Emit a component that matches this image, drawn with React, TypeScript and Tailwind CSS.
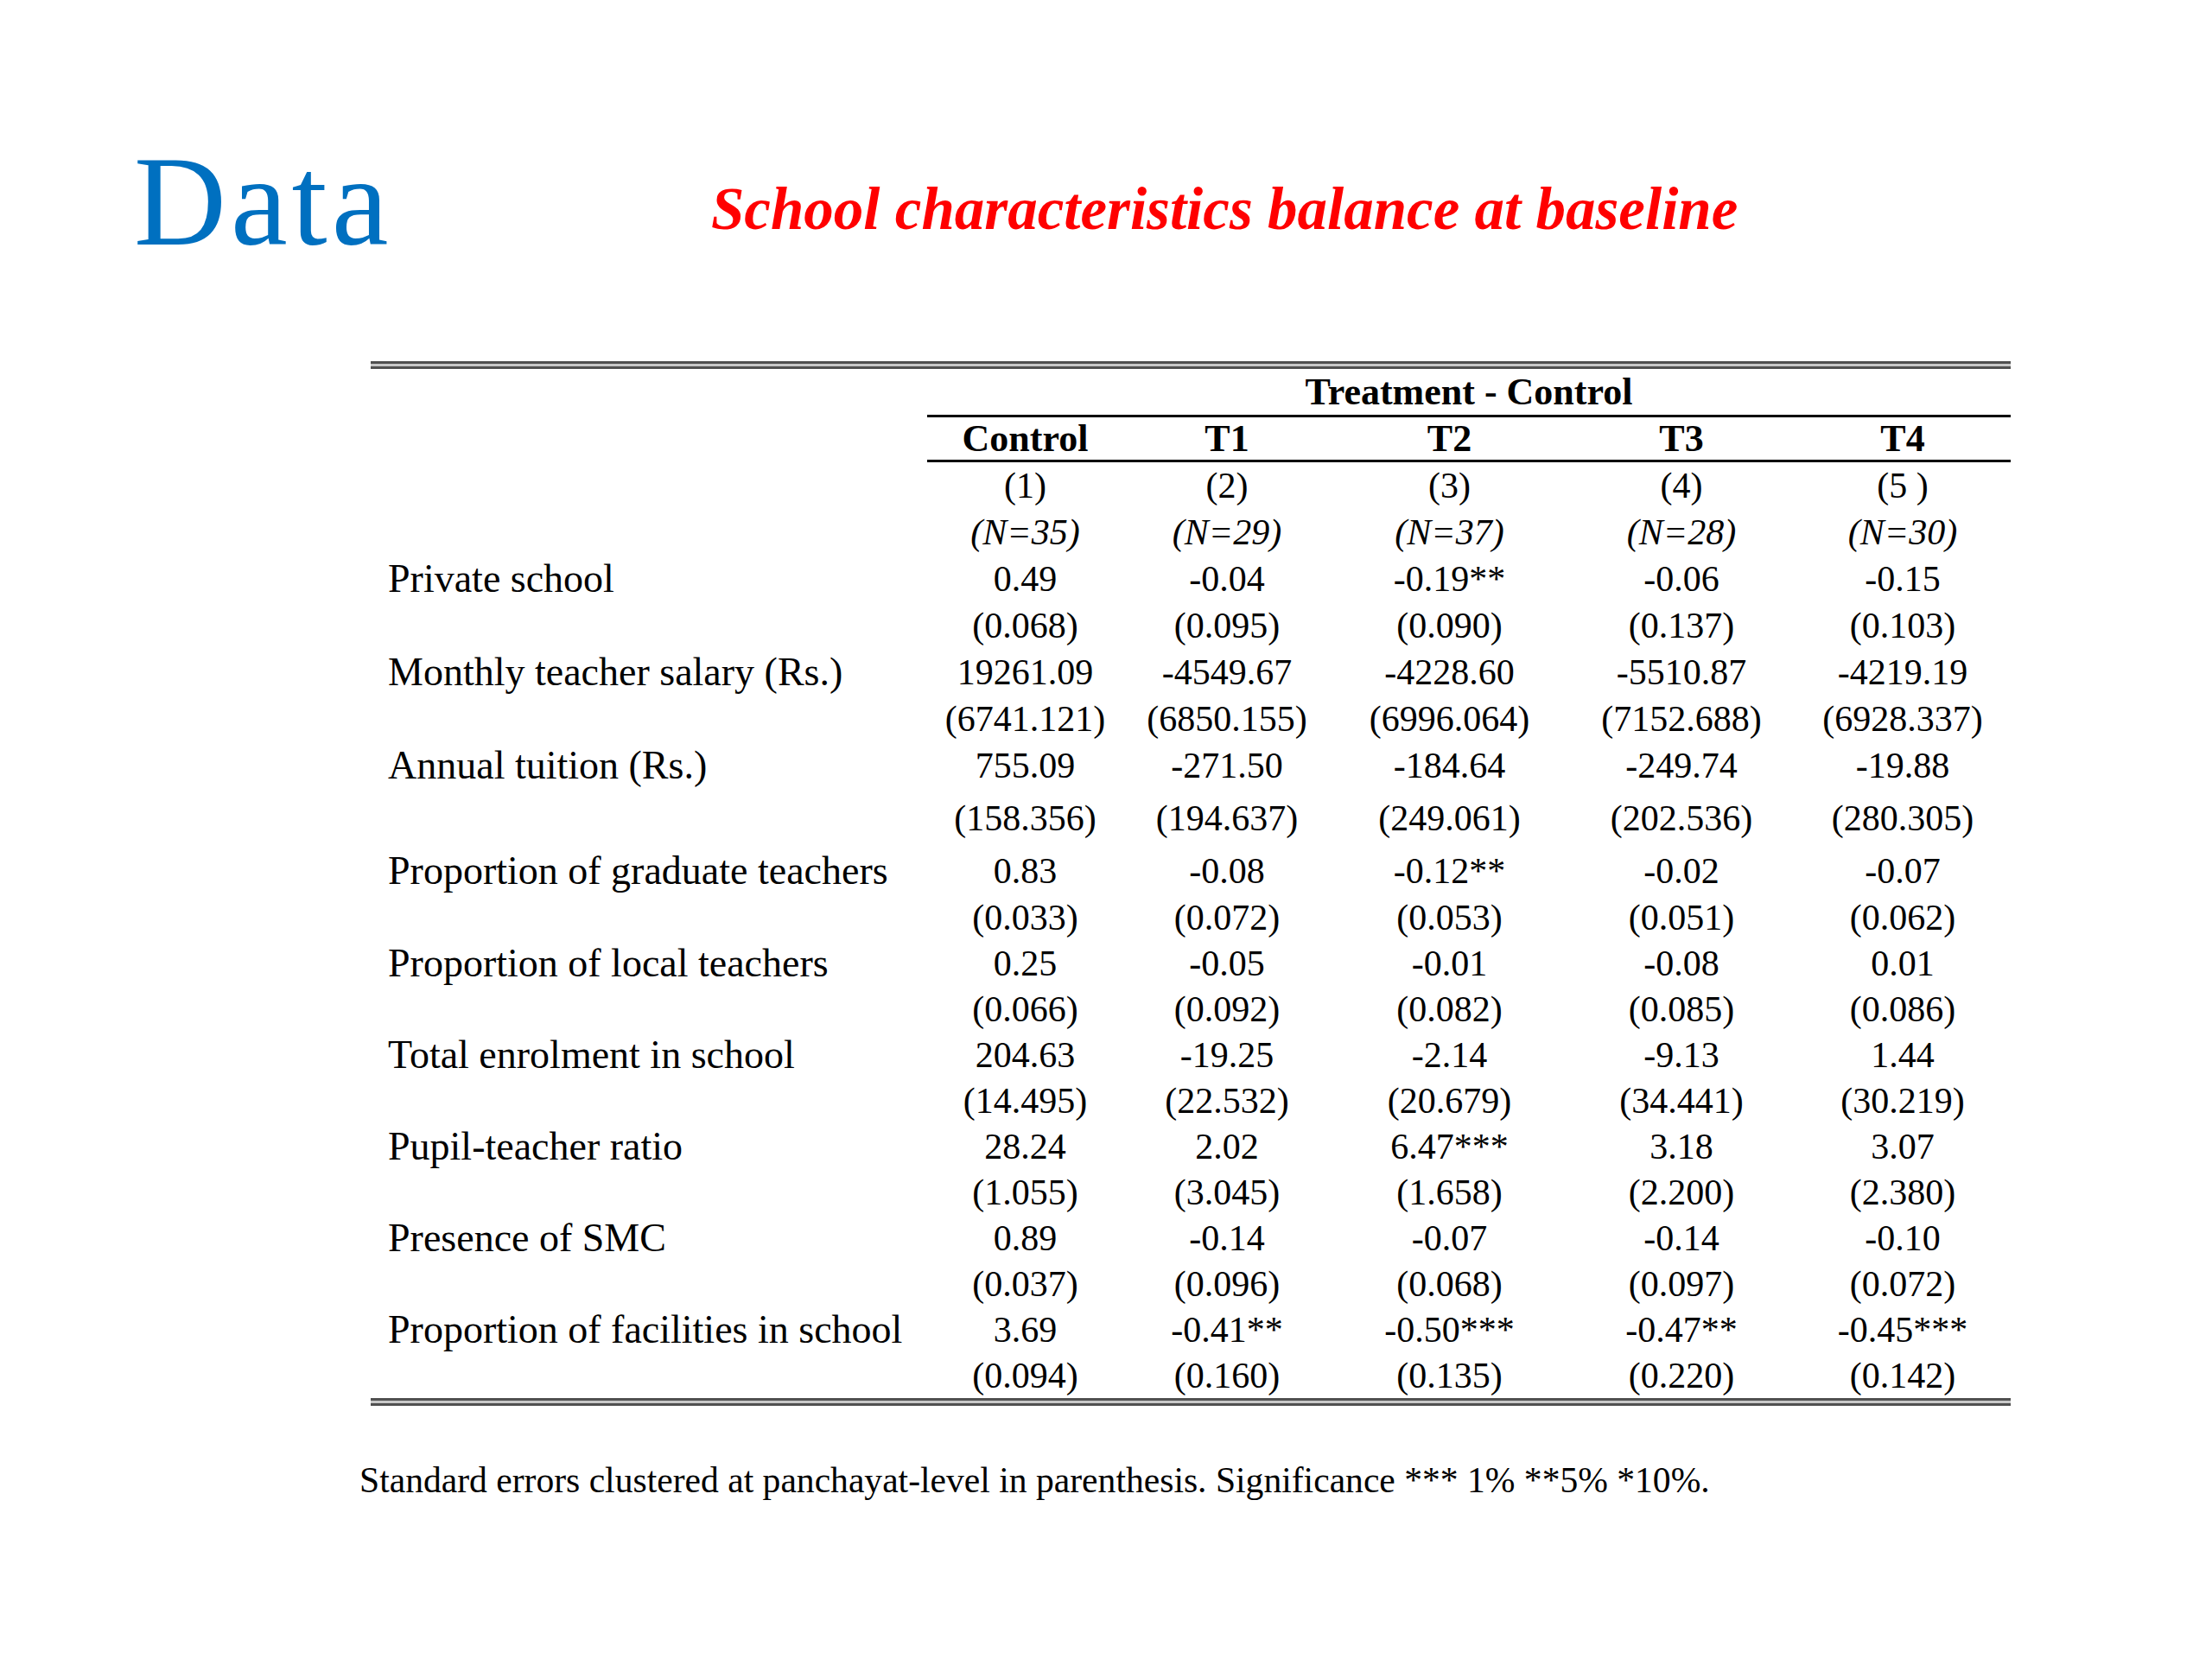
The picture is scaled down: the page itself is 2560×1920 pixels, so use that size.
import React from "react";

type Row = { label: string; v: string[]; se: string[]; h1: string; h2: string };

const rows: Row[] = [
  { label: "Private school", v: ["0.49", "-0.04", "-0.19**", "-0.06", "-0.15"], se: ["(0.068)", "(0.095)", "(0.090)", "(0.137)", "(0.103)"], h1: "h-[54px]", h2: "h-[54px]" },
  { label: "Monthly teacher salary (Rs.)", v: ["19261.09", "-4549.67", "-4228.60", "-5510.87", "-4219.19"], se: ["(6741.121)", "(6850.155)", "(6996.064)", "(7152.688)", "(6928.337)"], h1: "h-[54px]", h2: "h-[54px]" },
  { label: "Annual tuition (Rs.)", v: ["755.09", "-271.50", "-184.64", "-249.74", "-19.88"], se: ["(158.356)", "(194.637)", "(249.061)", "(202.536)", "(280.305)"], h1: "h-[54px]", h2: "h-[68px]" },
  { label: "Proportion of graduate teachers", v: ["0.83", "-0.08", "-0.12**", "-0.02", "-0.07"], se: ["(0.033)", "(0.072)", "(0.053)", "(0.051)", "(0.062)"], h1: "h-[54px]", h2: "h-[53px]" },
  { label: "Proportion of local teachers", v: ["0.25", "-0.05", "-0.01", "-0.08", "0.01"], se: ["(0.066)", "(0.092)", "(0.082)", "(0.085)", "(0.086)"], h1: "h-[53px]", h2: "h-[53px]" },
  { label: "Total enrolment in school", v: ["204.63", "-19.25", "-2.14", "-9.13", "1.44"], se: ["(14.495)", "(22.532)", "(20.679)", "(34.441)", "(30.219)"], h1: "h-[53px]", h2: "h-[53px]" },
  { label: "Pupil-teacher ratio", v: ["28.24", "2.02", "6.47***", "3.18", "3.07"], se: ["(1.055)", "(3.045)", "(1.658)", "(2.200)", "(2.380)"], h1: "h-[53px]", h2: "h-[53px]" },
  { label: "Presence of SMC", v: ["0.89", "-0.14", "-0.07", "-0.14", "-0.10"], se: ["(0.037)", "(0.096)", "(0.068)", "(0.097)", "(0.072)"], h1: "h-[53px]", h2: "h-[53px]" },
  { label: "Proportion of facilities in school", v: ["3.69", "-0.41**", "-0.50***", "-0.47**", "-0.45***"], se: ["(0.094)", "(0.160)", "(0.135)", "(0.220)", "(0.142)"], h1: "h-[53px]", h2: "h-[53px]" },
];

const grid = "grid grid-cols-[644px_227px_240px_275px_262px_250px]";

function Cells({ vals, className }: { vals: string[]; className?: string }) {
  return (
    <>
      {vals.map((v, i) => (
        <div key={i} className={`flex items-center justify-center whitespace-nowrap ${className ?? ""}`}>
          {v}
        </div>
      ))}
    </>
  );
}

function DoubleRule() {
  return <div className="h-[9px] border-y-[3px] border-[#505050] bg-[#c8c8c8]" />;
}

export default function App() {
  return (
    <div className="w-[2560px] h-[1920px] overflow-hidden bg-white text-black font-['Liberation_Serif','Times_New_Roman',serif]">
      <div className="flex items-start">
        <div className="ml-[155px] mt-[159px] w-[668px] text-[148px] leading-none tracking-[5px] text-[#0070c0]">Data</div>
        <div className="mt-[208px] text-[69px] leading-none font-bold italic text-[#ff0000] whitespace-nowrap">
          School characteristics balance at baseline
        </div>
      </div>

      <div className="ml-[429px] mt-[111px] w-[1898px] leading-none">
        <DoubleRule />
        <div className={`${grid} h-[53px]`}>
          <div />
          <div className="col-span-5 flex items-center justify-center text-[44px] font-bold whitespace-nowrap">
            Treatment - Control
          </div>
        </div>
        <div className="ml-[644px] h-[3px] bg-black" />
        <div className={`${grid} h-[49px] text-[44px] font-bold`}>
          <div />
          <Cells vals={["Control", "T1", "T2", "T3", "T4"]} />
        </div>
        <div className="ml-[644px] h-[3px] bg-black" />
        <div className={`${grid} h-[54px] text-[42px]`}>
          <div />
          <Cells vals={["(1)", "(2)", "(3)", "(4)", "(5 )"]} />
        </div>
        <div className={`${grid} h-[54px] text-[42px] italic`}>
          <div />
          <Cells vals={["(N=35)", "(N=29)", "(N=37)", "(N=28)", "(N=30)"]} />
        </div>
        {rows.map((r) => (
          <React.Fragment key={r.label}>
            <div className={`${grid} ${r.h1} text-[42px]`}>
              <div className="flex items-center pl-[20px] text-[46px] whitespace-nowrap">{r.label}</div>
              <Cells vals={r.v} />
            </div>
            <div className={`${grid} ${r.h2} text-[42px]`}>
              <div />
              <Cells vals={r.se} />
            </div>
          </React.Fragment>
        ))}
        <DoubleRule />
      </div>

      <div className="ml-[416px] mt-[66px] text-[41.6px] leading-none whitespace-nowrap">
        Standard errors clustered at panchayat-level in parenthesis. Significance *** 1% **5% *10%.
      </div>
    </div>
  );
}
